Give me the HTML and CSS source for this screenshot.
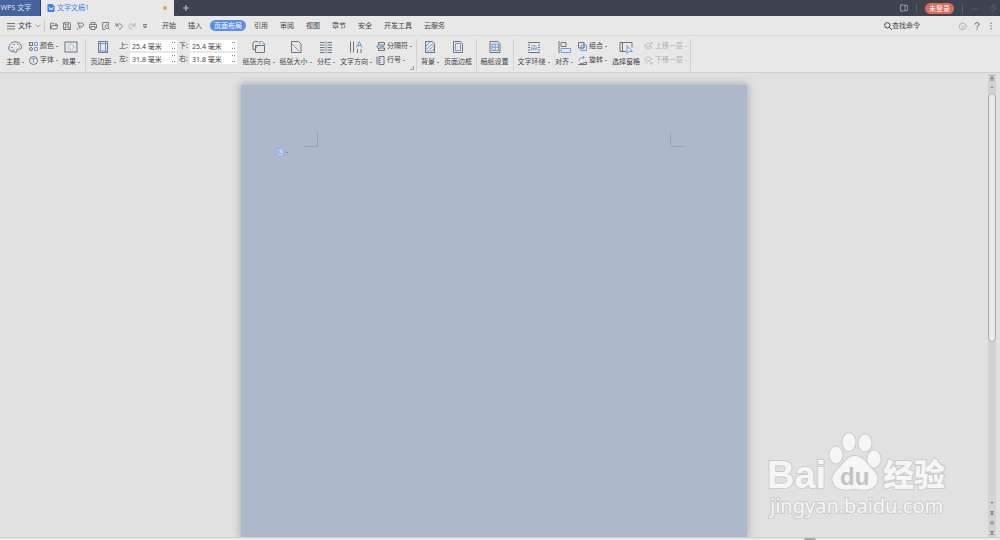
FILE: index.html
```html
<!DOCTYPE html>
<html lang="zh-CN">
<head>
<meta charset="utf-8">
<title>WPS 文字</title>
<link rel="stylesheet" href="styles.css">
</head>
<body>
<header class="titlebar">
  <button class="app">WPS 文字</button>
  <div class="doc-tab">
    <svg class="ic8" viewBox="0 0 8 9"><path d="M0 1q0-1 1-1h4.500l2.500 2.500V8q0 1-1 1H1Q0 9 0 8z" fill="#3f82ee"/><path d="M1.800 3.500l1 3 1.200-2 1.200 2 1-3" fill="none" stroke="#fff" stroke-width=".9"/></svg>
    <span class="doc-name">文字文稿1</span><i class="dot"></i>
  </div>
  <button class="new-tab" aria-label="新建"><svg class="ic8" viewBox="0 0 8 8"><path d="M4 1v6M1 4h6" stroke="#c3c5ca"/></svg></button>
  <div class="window-tools">
    <svg class="ic8" viewBox="0 0 8 8" fill="none" stroke="#9da0a9" stroke-width=".9"><rect x=".5" y="1" width="4.500" height="6"/><path d="M5 1.500h2.500v5H5"/></svg>
    <i class="bar"></i>
    <button class="login">未登录</button>
    <i class="bar"></i>
    <svg class="ic8 faint" viewBox="0 0 8 8"><path d="M1 5h6" stroke="#777b86"/></svg>
    <svg class="ic8 faint" viewBox="0 0 8 8" fill="none" stroke="#777b86" stroke-width=".8"><rect x="1" y="3" width="4" height="4" rx="1"/><path d="M3 2.500V1h4v4H5.500"/></svg>
  </div>
</header>

<nav class="menubar">
  <button class="file"><svg class="ic8" viewBox="0 0 8 8"><path d="M0 1.500h8M0 4.200h8M0 6.900h8" stroke="#555" stroke-width=".8"/></svg>文件<svg class="chev" viewBox="0 0 6 4"><path d="M.5.500L3 3 5.500.500" fill="none" stroke="#999" stroke-width=".8"/></svg></button>
  <div class="quick">
    <svg class="ic8" viewBox="0 0 8 8"><path d="M.5 7V1h2.500l1 1h3v1.500M.5 7l1.500-3.500h6L6.500 7z"/></svg>
    <svg class="ic8" viewBox="0 0 8 8"><path d="M.5.700h6l1 1v5.800h-7zM2 .7v2.300h3.500V.700M2 7.500V5h4v2.500"/></svg>
    <svg class="ic8" viewBox="0 0 8 8"><path d="M1 1h4.500a2 2 0 0 1 0 4H3M2.500 1v2.500M4.500 3L2.700 5l1.800 1.800M.5 7h2"/></svg>
    <svg class="ic8" viewBox="0 0 8 8"><path d="M2 2.500V.500h4v2M2 6H.500V2.500h7V6H6M2 4.500h4v3H2z"/></svg>
    <svg class="ic8" viewBox="0 0 8 8"><path d="M3 7.500H.700v-7h5.800V3M6.200 6.200L7.800 7.800"/><circle cx="4.800" cy="4.800" r="1.800"/></svg>
    <svg class="ic8" viewBox="0 0 8 8"><path d="M1 1v3h3M1.300 3.700C3 1 7 1.500 7 4.300 7 6 5.500 7 4 7"/></svg>
    <svg class="ic8 faint" viewBox="0 0 8 8"><path d="M7 1v3H4M6.700 3.700C5 1 1 1.500 1 4.300 1 6 2.500 7 4 7"/></svg>
    <svg class="ic8" viewBox="0 0 8 8"><path d="M2 2.500h4M2.200 4.200h3.600L4 6z"/></svg>
  </div>
  <div class="tabs">
    <button>开始</button><button>插入</button><button class="active">页面布局</button><button>引用</button><button>审阅</button><button>视图</button><button>章节</button><button>安全</button><button>开发工具</button><button>云服务</button>
  </div>
  <button class="find"><svg class="ic8" viewBox="0 0 8 8" fill="none" stroke="#444"><circle cx="3.300" cy="3.300" r="2.700"/><path d="M5.300 5.300L8 8"/></svg>查找命令</button>
  <div class="help">
    <svg class="ic8" viewBox="0 0 8 8" fill="none" stroke="#999" stroke-width=".7"><path d="M2 7.300A3.600 3.300 0 1 1 5 7.500zM2.500 4.800q1.500 1.200 3 0M2.700 2.800v.8M5.300 2.800v.8"/></svg>
    <svg class="ic8" viewBox="0 0 8 8" fill="none" stroke="#555"><path d="M2 2.500C2 0 6 0 6 2.300 6 4 4 3.800 4 5.500M4 6.700v1"/></svg>
    <svg class="ic8" viewBox="0 0 8 8" fill="#666"><circle cx="4" cy="1.200" r=".7"/><circle cx="4" cy="4" r=".7"/><circle cx="4" cy="6.800" r=".7"/></svg>
  </div>
</nav>

<section class="ribbon">
  <button class="tool"><svg class="ic14" viewBox="0 0 14 14"><path d="M4 11.500C1.500 11 .5 9 1 7 2 3 5 1.500 8 2c4 .5 5.500 3 5.500 5.500 0 2-1.500 2-3 1.700-2-.3-2 .8-1.500 1.800.5 1.500-1 1.500-2 1z"/><path class="b" d="M3 7.500h2M5 4.500h2M9 4.500h1.500M11 7h1M6 9L4.500 12"/></svg><span class="drop">主题</span></button>
  <div class="stack">
    <button><svg class="ic9" viewBox="0 0 9 9"><rect x=".5" y=".5" width="3" height="3"/><circle cx="2" cy="7" r="1.500"/><path class="b" d="M5.500.500h3v3h-3zM5.500 5.500h3v3h-3z"/></svg><span class="drop">颜色</span></button>
    <button><svg class="ic9" viewBox="0 0 9 9"><circle cx="4.500" cy="4.500" r="4"/><path class="b" d="M2.500 2.700h4M4.500 2.700v4"/></svg><span class="drop">字体</span></button>
  </div>
  <button class="tool"><svg class="ic14" viewBox="0 0 14 14"><rect x="1" y="2" width="12" height="10"/><circle class="b" cx="7" cy="7" r="2.800" stroke-dasharray="1.200 1"/></svg><span class="drop">效果</span></button>
  <i class="sep"></i>
  <button class="tool"><svg class="ic14" viewBox="0 0 14 14"><path d="M2.500 1.500h9v11h-9z"/><path class="b" d="M4.500 1v12M9.500 1v12M2.500 3.500h9M2.500 11h9"/></svg><span class="drop">页边距</span></button>
  <div class="margins">
    <label for="mt">上:</label><span class="spin"><input id="mt" value="25.4 毫米"><i></i></span>
    <label for="mb">下:</label><span class="spin"><input id="mb" value="25.4 毫米"><i></i></span>
    <label for="ml">左:</label><span class="spin"><input id="ml" value="31.8 毫米"><i></i></span>
    <label for="mr">右:</label><span class="spin"><input id="mr" value="31.8 毫米"><i></i></span>
  </div>
  <button class="tool"><svg class="ic14" viewBox="0 0 14 14"><path d="M3 9.500H1V3l1.500-1.500H6M3.500 5.500h9v7h-9zM3.500 8L6 5.500"/><path class="b" d="M7 2.500c2-1.500 5-1 5.500 2M11 3.500l1.500 1.500L14 3.500M8.500 1L7 2.500 8.500 4"/></svg><span class="drop">纸张方向</span></button>
  <button class="tool"><svg class="ic14" viewBox="0 0 14 14"><path d="M2.500 1.500h7l2.500 2.500v8.500H2.500z"/><path class="b" d="M3 4l7 7"/></svg><span class="drop">纸张大小</span></button>
  <button class="tool"><svg class="ic14" viewBox="0 0 14 14"><path d="M1 2.500h4.500M1 5h4.500M1 7.500h4.500M1 10h4.500M1 12.500h4.500M8.500 2.500H13M8.500 5H13M8.500 7.500H13M8.500 10H13M8.500 12.500H13"/><path class="b" d="M7 1v12.500"/></svg><span class="drop">分栏</span></button>
  <button class="tool"><svg class="ic14" viewBox="0 0 14 14"><path d="M1.500 1.500v11M4.500 1.500v11M8.500 9v4M12 9v4"/><path class="b" d="M7.500 7.500L10.200 1.500 13 7.500M8.500 5.500h3.500"/></svg><span class="drop">文字方向</span></button>
  <div class="stack">
    <button><svg class="ic9" viewBox="0 0 9 9"><path d="M2.500 3V.500h6V3zM2.500 8.500V6h6v2.500z"/><path class="b" d="M2.500 4.500H.500M2 3L.500 4.500 2 6M4 4.500h4"/></svg><span class="drop">分隔符</span></button>
    <button><svg class="ic9" viewBox="0 0 9 9"><path d="M3 .5h5v8H3zM1 .5v8"/><path class="b" d="M3 2.500h2M3 4.500h2M3 6.500h2"/></svg><span class="drop">行号</span></button>
  </div>
  <i class="sep"></i>
  <button class="tool"><svg class="ic14" viewBox="0 0 14 14"><path d="M2.500 1.500h7l2 2v9h-9z"/><path class="b" d="M3 6l4-4M3 9.500l8-7M4 12l7-6.500M7.500 12l3.500-3"/></svg><span class="drop">背景</span></button>
  <button class="tool"><svg class="ic14" viewBox="0 0 14 14"><path d="M2.500 1.500h7l2 2v9h-9z"/><path class="b" d="M4.500 3.500h5v7h-5z"/></svg><span>页面边框</span></button>
  <i class="sep"></i>
  <button class="tool"><svg class="ic14" viewBox="0 0 14 14"><path d="M2 1.500h8l2 2v9H2z"/><path class="b" d="M4 4h6.500v6.500H4zM4 7.200h6.500M7.200 4v6.500"/></svg><span>稿纸设置</span></button>
  <i class="sep"></i>
  <button class="tool"><svg class="ic14" viewBox="0 0 14 14"><path d="M1 2.500h12M1 5h2M11 5h2M1 7.500h2M11 7.500h2M1 10h2M11 10h2M1 12.500h12"/><path class="b" d="M4.500 9V7.500C4.500 5 9.500 5 9.500 7.500V9M4.500 9.500h2V8h1.500v1.500h1.500"/></svg><span class="drop">文字环绕</span></button>
  <button class="tool"><svg class="ic14" viewBox="0 0 14 14"><path d="M2 1v12.500M4 2.500h5v4H4z"/><path class="b" d="M4 8.500h9.500v4H4z"/></svg><span class="drop">对齐</span></button>
  <div class="stack">
    <button><svg class="ic9" viewBox="0 0 9 9"><path d="M.5.500h5.500v5.500H.500z"/><path class="b" d="M3 3h5.500v5.500H3zM6 1v5H3"/></svg><span class="drop">组合</span></button>
    <button><svg class="ic9" viewBox="0 0 9 9"><path d="M.5 8.500h8V6z"/><path class="b" d="M1 5c0-2.500 2-3.500 5-3.500M5 0l1.500 1.500L5 3"/></svg><span class="drop">旋转</span></button>
  </div>
  <button class="tool"><svg class="ic14" viewBox="0 0 14 14"><path d="M7 11.500H1v-9h12v5M3.500 2.500v9"/><path class="b" d="M8 5.500v8l2-2h3.500z"/></svg><span>选择窗格</span></button>
  <div class="stack off">
    <button disabled><svg class="ic9" viewBox="0 0 9 9"><path d="M5 1L.500 3 4 5l4-2M.500 5L4 7.500 8 5M5 3l3-3M6 0h2v2"/></svg><span class="drop">上移一层</span></button>
    <button disabled><svg class="ic9" viewBox="0 0 9 9"><path d="M4 .5L.500 3 4 5l4-2zM.500 5L4 7.500M5 5l3 3M8 6v2H6"/></svg><span class="drop">下移一层</span></button>
  </div>
  <i class="sep"></i>
  <svg class="launcher" viewBox="0 0 4 4"><path d="M3.500 0v3.500H0" fill="none" stroke="#888" stroke-width=".8"/></svg>
</section>

<main class="workspace">
  <div class="canvas">
    <article class="paper">
      <div class="corners"><i class="corner left"></i><i class="corner right"></i></div>
      <button class="paste" aria-label="粘贴选项"><svg class="ic8" viewBox="0 0 8 8"><path d="M1 .5h4.500L7.500 3v5H1z" fill="#bed2ee" stroke="#86aae0"/><path d="M3 2v3.500h3" fill="none" stroke="#86aae0"/></svg><span class="drop"></span></button>
    </article>
  </div>
  <aside class="scroll">
    <svg class="mark" viewBox="0 0 6 6"><path d="M1.500 1h3M3 2L1.500 3.500h3zM1 5h4"/></svg>
    <svg class="mark" viewBox="0 0 6 6"><path d="M2 3.500h2L3 2.500z"/></svg>
    <i class="thumb"></i>
    <div class="marks">
      <svg class="mark" viewBox="0 0 6 6"><path d="M2 2.500h2L3 3.500z"/></svg>
      <svg class="mark" viewBox="0 0 6 6"><path d="M1.500 1.500h3L3 3zM1.500 4.500h3L3 3z"/></svg>
      <svg class="mark" viewBox="0 0 6 6"><circle cx="3" cy="3" r="1.500"/></svg>
      <svg class="mark" viewBox="0 0 6 6"><path d="M1.500 1.500h3L3 3zM1.500 4.500h3L3 3z"/></svg>
    </div>
  </aside>
  <div class="watermark">
    <svg viewBox="0 0 184 90" width="184" height="90">
      <g class="wm">
        <text class="wm-bai" x="-1" y="57">Bai</text>
        <ellipse cx="68" cy="24" rx="6.500" ry="8.500"/><ellipse cx="81" cy="11" rx="6.500" ry="9"/><ellipse cx="97" cy="12" rx="6.500" ry="8.500"/><ellipse cx="106" cy="28" rx="6.500" ry="8.500"/>
        <path d="M87 25c7 0 11 6 16 12 5 5 8 8 6 14-3 9-12 8-22 7-10 1-19 2-22-7-2-6 1-9 6-14 6-6 9-12 16-12z"/>
        <text class="wm-cn" x="115" y="55">经验</text>
        <text class="wm-url" x="2" y="82">jingyan.baidu.com</text>
      </g>
      <text class="wm-du" x="72" y="54">du</text>
    </svg>
  </div>
</main>
<footer class="status"><i></i></footer>
</body>
</html>
```
FILE: styles.css
```css
* { box-sizing: border-box; }
body {
  margin: 0; height: 100vh; display: flex; flex-direction: column; overflow: hidden;
  background: #e8e8e8; color: #444;
  font: 7px/10px "Noto Sans", "Noto Sans CJK SC", sans-serif;
}
button { border: 0; padding: 0; background: none; color: inherit; font: inherit; white-space: nowrap; }
svg { display: block; flex: none; }
.ic8 { width: 8px; height: 8px; }
.ic9 { width: 9px; height: 9px; }
.ic14 { width: 14px; height: 14px; }
.faint { opacity: .5; }

.titlebar { display: flex; flex: none; height: 16px; background: #3f4350; }
.app { width: 41px; padding-right: 8px; background: #44649b; color: #dbe3f0; border-right: 1px solid #34415b; }
.doc-tab { display: flex; align-items: center; gap: 2px; width: 133px; padding: 0 7px 0 6px; background: #e8e8e8; color: #4284e8; }
.doc-name { flex: 1; }
.dot { width: 4px; height: 4px; border-radius: 2px; background: #f29a4c; }
.new-tab { padding: 0 8px; }
.window-tools { display: flex; align-items: center; gap: 10px; margin-left: auto; padding-right: 3px; }
.bar { width: 1px; height: 9px; margin: 0 -2px; background: #5b5f6b; }
.login { width: 29px; height: 11px; border-radius: 6px; background: #dc6a5c; color: #fff; line-height: 11px; }

.menubar { display: flex; flex: none; align-items: center; height: 20px; border-bottom: 1px solid #dcdcdc; }
.file { display: flex; align-items: center; gap: 3px; width: 45px; height: 12px; padding-left: 7px; border-right: 1px solid #c8c8c8; }
.chev { width: 6px; height: 4px; }
.quick { display: flex; gap: 5px; padding-left: 5px; width: 117px; }
.quick svg { fill: none; stroke: #666; stroke-width: .8; }
.tabs { display: flex; gap: 12px; }
.tabs .active { width: 36px; height: 11px; margin: 0 -4px; border-radius: 6px; background: #5b90e8; color: #fff; line-height: 11px; }
.find { display: flex; align-items: center; margin-left: auto; margin-right: 39px; gap: 0; }
.help { display: flex; gap: 6px; padding-right: 5px; }

.ribbon {
  display: grid; flex: none; height: 37px; padding: 3px 0 7px 3px; position: relative;
  grid-template-columns: 24px 32px 24px 4px 32px 121px 37px 37px 24px 36px 40px 4px 24px 32px 4px 33px 4px 37px 24px 34px 32px 46px 4px;
  border-bottom: 1px solid #cfcfcf; box-shadow: 0 1px 2px #cfcfcf;
}
.ribbon svg { fill: none; stroke: #666; stroke-width: .9; }
.ribbon svg .b { stroke: #5b97e2; }
.tool { display: flex; flex-direction: column; align-items: center; justify-content: space-between; padding-top: 1px; }
.drop { display: flex; align-items: center; gap: 2px; }
.drop::after { content: ""; width: 2px; height: 1px; background: #888; }
.stack { display: grid; grid-template-rows: 14px 14px; padding-left: 2px; }
.stack button { display: flex; align-items: center; gap: 2px; }
.off { opacity: .35; }
.sep { width: 1px; margin: 0 0 -4px 2px; background: #d2d2d2; }
.margins { display: grid; grid-template-columns: 9px 47px 9px 47px; grid-template-rows: 11px 11px; gap: 2px; padding-top: 1px; align-items: center; }
.spin { display: flex; align-items: center; background: #fff; border-radius: 1px; height: 11px; padding-right: 2px; }
.spin input { flex: 1; min-width: 0; height: 11px; border: 0; padding: 0 2px; background: none; color: #444; font: inherit; }
.spin i { width: 3px; height: 7px; border: 1px dotted #888; border-left: 0; border-right: 0; }
.launcher { position: absolute; left: 410px; bottom: 2px; width: 4px; height: 4px; }

.workspace { position: relative; display: flex; flex: 1; min-height: 0; padding-top: 1px; background: #e1e1e1; overflow: hidden; }
.canvas { display: flex; flex: 1; justify-content: center; padding-top: 11px; }
.paper { width: 506px; background: #adb8cb; padding: 47px 62px 0; box-shadow: 0 0 8px 1px #aaa; }
.corners { display: flex; justify-content: space-between; }
.corner { width: 15px; height: 15px; border-bottom: 1px solid #98a3b5; }
.left { border-right: 1px solid #98a3b5; }
.right { border-left: 1px solid #98a3b5; }
.paste { display: flex; align-items: center; gap: 2px; margin: 1px 0 0 -27px; }
.scroll { display: flex; flex-direction: column; align-items: center; width: 8px; margin-right: 4px; padding: 1px 0; gap: 3px; background: #d2d2d2; }
.mark { width: 6px; height: 6px; fill: none; stroke: #777; stroke-width: .8; }
.thumb { width: 8px; height: 54%; border: 1px solid #aaa; border-radius: 4px; background: #ececec; }
.marks { display: grid; gap: 4px; margin-top: auto; }
.watermark { position: absolute; right: 48px; bottom: 16px; }
.watermark svg { overflow: visible; }
.wm { fill: #f6f6f6; stroke: #cbcbcb; stroke-width: 2px; paint-order: stroke; }
.wm-bai { font: bold 38px "Liberation Sans", sans-serif; }
.wm-cn { font: 900 31px "Noto Sans CJK SC", sans-serif; }
.wm-url { font: 20px "Noto Sans", sans-serif; }
.wm-du { font: bold 24px "Liberation Sans", sans-serif; fill: #c4c4c4; }

.status { flex: none; height: 3px; background: #e8e8e8; border-top: 1px solid #cfcfcf; }
.status i { display: block; width: 12px; height: 2px; margin-left: 804px; border-radius: 2px 2px 0 0; background: #aaa; }
```
